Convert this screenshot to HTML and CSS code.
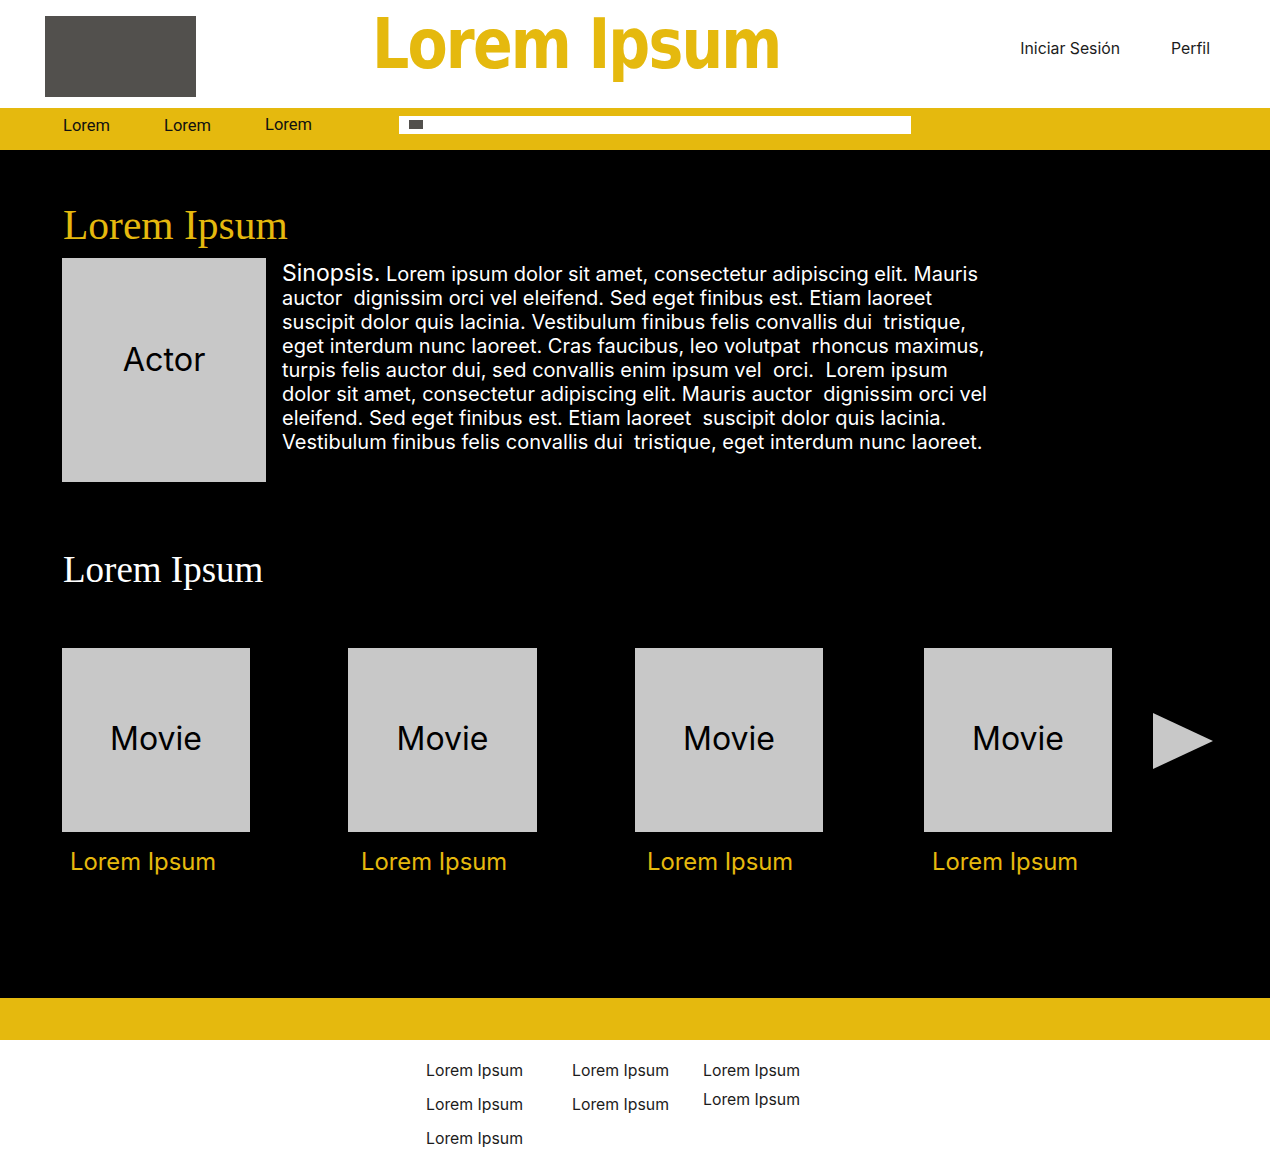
FILE: index.html
```html
<!DOCTYPE html>
<html lang="es">
<head>
<meta charset="utf-8">
<title>Lorem Ipsum</title>
<link rel="stylesheet" href="styles.css">
</head>
<body>
<header class="top">
  <div class="logo"></div>
  <h1 class="brand">Lorem Ipsum</h1>
  <nav class="account">
    <a class="account-link" href="#">Iniciar Sesión</a>
    <a class="account-link" href="#">Perfil</a>
  </nav>
</header>
<div class="navbar">
  <a class="nav-link" href="#">Lorem</a>
  <a class="nav-link" href="#">Lorem</a>
  <a class="nav-link nav-link-up" href="#">Lorem</a>
  <div class="search"><span class="search-icon"></span></div>
</div>
<main class="main">
  <h2 class="title-gold">Lorem Ipsum</h2>
  <section class="actor-row">
    <div class="actor-box"><span>Actor</span></div>
    <p class="synopsis"><span class="syn-label">Sinopsis.</span> Lorem ipsum dolor sit amet, consectetur adipiscing elit. Mauris auctor&nbsp; dignissim orci vel eleifend. Sed eget finibus est. Etiam laoreet suscipit dolor quis lacinia. Vestibulum finibus felis convallis dui&nbsp; tristique, eget interdum nunc laoreet. Cras faucibus, leo volutpat&nbsp; rhoncus maximus, turpis felis auctor dui, sed convallis enim ipsum vel&nbsp; orci.&nbsp; Lorem ipsum dolor sit amet, consectetur adipiscing elit. Mauris auctor&nbsp; dignissim orci vel eleifend. Sed eget finibus est. Etiam laoreet&nbsp; suscipit dolor quis lacinia. Vestibulum finibus felis convallis dui&nbsp; tristique, eget interdum nunc laoreet.</p>
  </section>
  <h2 class="title-white">Lorem Ipsum</h2>
  <section class="movies">
    <div class="movie m1"><div class="poster"><span>Movie</span></div><div class="caption c1">Lorem Ipsum</div></div>
    <div class="movie m2"><div class="poster"><span>Movie</span></div><div class="caption c2">Lorem Ipsum</div></div>
    <div class="movie m3"><div class="poster"><span>Movie</span></div><div class="caption c3">Lorem Ipsum</div></div>
    <div class="movie m4"><div class="poster"><span>Movie</span></div><div class="caption c4">Lorem Ipsum</div></div>
    <svg class="next" width="60" height="56" viewBox="0 0 60 56"><polygon points="0,0 60,28 0,56" fill="#c8c8c8"/></svg>
  </section>
</main>
<div class="band"></div>
<footer class="footer">
  <ul class="fcol fcol1"><li>Lorem Ipsum</li><li>Lorem Ipsum</li><li>Lorem Ipsum</li></ul>
  <ul class="fcol fcol2"><li>Lorem Ipsum</li><li>Lorem Ipsum</li></ul>
  <ul class="fcol fcol3"><li>Lorem Ipsum</li><li>Lorem Ipsum</li></ul>
</footer>
</body>
</html>
```
FILE: styles.css
```css
* { box-sizing: border-box; }
html, body { margin: 0; padding: 0; }
body { background: #fff; font-family: Inter, "Noto Sans", sans-serif; width: 1270px; }
a { text-decoration: none; color: inherit; }

.top { height: 108px; display: flex; align-items: flex-start; }
.logo { width: 151px; height: 81px; background: #52504d; margin: 16px 0 0 45px; flex: none; }
.brand {
  margin: 4px 0 0 176px; width: 405px; font-family: "DejaVu Sans Condensed", "DejaVu Sans", sans-serif;
  font-weight: 700; font-size: 70px; line-height: 80px; color: #e5b90e; letter-spacing: -2px; white-space: nowrap;
  transform: scaleX(0.93); transform-origin: left top;
}
.account { margin-left: auto; display: flex; gap: 51px; margin-top: 39px; margin-right: 60px; }
.account-link { font-size: 15.8px; color: #1c1c1c; line-height: 20px; }

.navbar { height: 42px; background: #e5b90e; display: flex; align-items: flex-start; padding-left: 63px; }
.nav-link { font-family: Roboto, "Liberation Sans", sans-serif; font-size: 16.5px; color: #111; margin-top: 8px; line-height: 19px; width: 101px; }
.nav-link-up { margin-top: 7px; width: 134px; }
.search { width: 512px; height: 18px; background: #fff; margin-top: 8px; padding: 4px 0 0 10px; }
.search-icon { display: block; width: 14px; height: 9px; background: #52504d; }

.main { background: #000; height: 848px; padding: 1px 0 0 62px; }
.title-gold { font-family: "Liberation Serif", serif; font-weight: 400; color: #e5b90e; font-size: 41.5px; line-height: 44px; margin: 52px 0 0 1px; }
.actor-row { display: flex; margin-top: 11px; }
.actor-box { width: 204px; height: 224px; background: #c8c8c8; flex: none; display: flex; justify-content: center; padding-top: 82px; }
.actor-box span { font-size: 32.4px; color: #000; line-height: 40px; }
.synopsis { margin: 3px 0 0 16px; width: 712px; color: #fff; font-size: 20px; line-height: 24px; }
.syn-label { font-size: 23px; line-height: 24px; }
.title-white { font-family: "Liberation Serif", serif; font-weight: 400; color: #fff; font-size: 37px; line-height: 40px; margin: 68px 0 0 1px; }

.movies { display: flex; align-items: flex-start; margin-top: 58px; }
.movie { width: 188px; flex: none; }
.m2 { margin-left: 98px; }
.m3 { margin-left: 99px; }
.m4 { margin-left: 101px; }
.m2 .poster { width: 189px; }
.poster { height: 184px; background: #c8c8c8; display: flex; align-items: center; justify-content: center; padding-bottom: 4px; }
.poster span { font-size: 32px; color: #000; }
.caption { color: #e5b90e; font-size: 23.8px; line-height: 28px; margin-top: 16px; white-space: nowrap; }
.c1 { padding-left: 8px; }
.c2 { padding-left: 13px; }
.c3 { padding-left: 12px; }
.c4 { padding-left: 8px; }
.next { margin: 65px 0 0 41px; flex: none; }

.band { height: 42px; background: #e5b90e; }
.footer { height: 122px; display: flex; padding-left: 426px; }
.fcol { list-style: none; margin: 0; padding: 0; font-size: 15.8px; color: #1c1c1c; }
.fcol li { line-height: 20px; }
.fcol li:first-child { margin-top: 21px; }
.fcol li + li { margin-top: 14px; }
.fcol1 { width: 146px; }
.fcol2 { width: 131px; }
.fcol3 li + li { margin-top: 9px; }
```
